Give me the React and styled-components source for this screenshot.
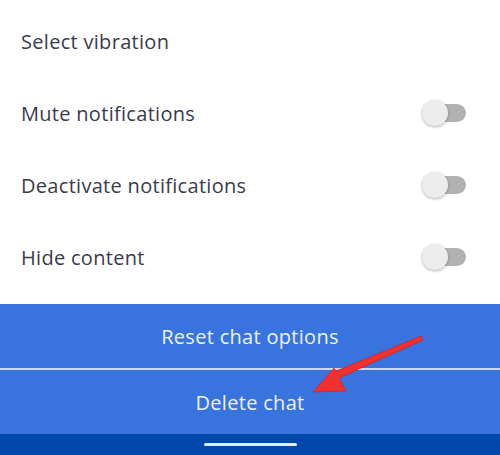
import styled, { createGlobalStyle } from "styled-components";

const GlobalStyle = createGlobalStyle`
  html, body {
    margin: 0;
    padding: 0;
    background: #ffffff;
  }
  #root {
    width: 500px;
    height: 455px;
    overflow: hidden;
  }
`;

const Screen = styled.div`
  position: relative;
  width: 500px;
  height: 455px;
  display: flex;
  flex-direction: column;
  font-family: "Open Sans", "Liberation Sans", sans-serif;
  background: #ffffff;
`;

const List = styled.div`
  display: flex;
  flex-direction: column;
  padding-top: 5px;
  height: 304px;
  box-sizing: border-box;
`;

const Row = styled.div`
  height: 72px;
  display: flex;
  align-items: center;
  justify-content: space-between;
  padding: 0 35px 0 21px;
`;

const Label = styled.span`
  font-size: 20px;
  color: #3b3b4d;
  letter-spacing: 0.3px;
`;

const Switch = styled.div`
  position: relative;
  width: 44px;
  height: 18px;
  border-radius: 9px;
  background: #b2b2b2;
  margin-right: -1px;
`;

const Thumb = styled.div`
  position: absolute;
  left: 0;
  top: -4px;
  width: 26px;
  height: 26px;
  border-radius: 50%;
  background: #ececec;
  box-shadow: 0 1px 3px rgba(0, 0, 0, 0.3);
`;

const Actions = styled.div`
  display: flex;
  flex-direction: column;
  background: #3873de;
`;

const ActionButton = styled.button`
  height: 64px;
  border: none;
  background: transparent;
  color: #eef2fb;
  font-family: inherit;
  font-size: 20px;
  letter-spacing: 0.3px;
  display: flex;
  align-items: center;
  justify-content: center;
  padding: 0;
`;

const Divider = styled.div`
  height: 2px;
  background: #c9d8f5;
`;

const NavBar = styled.div`
  flex: 1;
  background: #0047ab;
  display: flex;
  align-items: center;
  justify-content: center;
`;

const HomeHandle = styled.div`
  width: 93px;
  height: 3px;
  border-radius: 2px;
  background: #e6ecf7;
`;

const Arrow = styled.svg`
  position: absolute;
  left: 0;
  top: 0;
  pointer-events: none;
`;

const rows = [
  { label: "Select vibration", toggle: false },
  { label: "Mute notifications", toggle: true },
  { label: "Deactivate notifications", toggle: true },
  { label: "Hide content", toggle: true },
];

export default function App() {
  return (
    <>
      <GlobalStyle />
      <Screen>
        <List>
          {rows.map((r) => (
            <Row key={r.label}>
              <Label>{r.label}</Label>
              {r.toggle && (
                <Switch>
                  <Thumb />
                </Switch>
              )}
            </Row>
          ))}
        </List>
        <Actions>
          <ActionButton>Reset chat options</ActionButton>
          <Divider />
          <ActionButton>Delete chat</ActionButton>
        </Actions>
        <NavBar>
          <HomeHandle />
        </NavBar>
        <Arrow width="500" height="455" viewBox="0 0 500 455">
          <polygon
            points="421,336 423,340 339,378 346,391 313,392 334,368 336,371"
            fill="#f2302f"
            stroke="#c81f1f"
            strokeWidth="0.6"
            strokeLinejoin="round"
          />
        </Arrow>
      </Screen>
    </>
  );
}
